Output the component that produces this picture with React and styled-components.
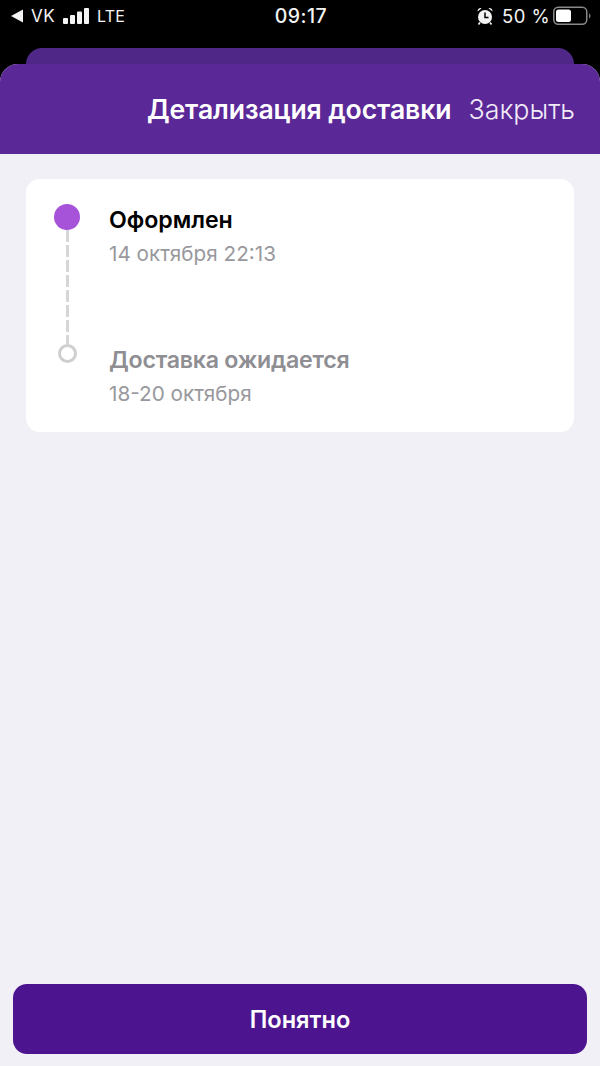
import React from 'react'
import styled, { createGlobalStyle } from 'styled-components'

const Global = createGlobalStyle`
  html, body { margin: 0; padding: 0; background: #000; }
  * { box-sizing: border-box; }
  body { font-family: Inter, "Noto Sans", sans-serif; }
`

const Page = styled.div`
  width: 600px;
  height: 1066px;
  background: #000;
  display: flex;
  flex-direction: column;
  overflow: hidden;
`

const StatusBar = styled.div`
  height: 48px;
  flex: none;
  padding: 0 9px 16px 11px;
  display: flex;
  align-items: center;
  justify-content: space-between;
  color: #f4f4f4;
  font-size: 18.5px;
`
const StatusSide = styled.div`
  width: 200px;
  display: flex;
  align-items: center;
  gap: ${p => p.$gap}px;
  justify-content: ${p => (p.$right ? 'flex-end' : 'flex-start')};
`
const Clock = styled.div`
  font-weight: 500;
  font-size: 19.5px;
  letter-spacing: 0.5px;
`
const Carrier = styled.span`
  font-size: 17px;
  letter-spacing: 0.4px;
`
const Network = styled.span`
  font-size: 16px;
  letter-spacing: 0.2px;
`
const Percent = styled.span`
  letter-spacing: 0.4px;
  margin-left: 1px;
  margin-right: -5px;
`

const BackSheet = styled.div`
  height: 16px;
  flex: none;
  margin: 0 26px;
  background: #4f2787;
  border-radius: 16px 16px 0 0;
`
const Sheet = styled.div`
  flex: 1;
  display: flex;
  flex-direction: column;
  background: #f1f0f6;
  border-radius: 18px 18px 0 0;
  overflow: hidden;
`
const Header = styled.div`
  height: 90px;
  flex: none;
  background: #5b2898;
  padding: 0 25px 0 0;
  display: flex;
  align-items: center;
  justify-content: flex-end;
  gap: 17px;
  color: #fff;
`
const Title = styled.div`
  font-size: 26.6px;
  font-weight: 600;
  letter-spacing: -0.1px;
`
const CloseLink = styled.div`
  font-size: 26.8px;
  font-weight: 300;
  color: #f1ebf8;
`

const Card = styled.div`
  margin: 25px 26px 0;
  padding: 25px 28px;
  background: #fff;
  border-radius: 14px;
`
const Step = styled.div`
  display: flex;
  gap: 29px;
  height: ${p => p.$height}px;
`
const Marker = styled.div`
  width: 26px;
  flex: none;
  display: flex;
  flex-direction: column;
  align-items: center;
`
const Dot = styled.div`
  width: 26px;
  height: 26px;
  border-radius: 50%;
  flex: none;
  background: #a653d9;
`
const Ring = styled.div`
  width: 19px;
  height: 19px;
  border-radius: 50%;
  flex: none;
  border: 3px solid #cfcfd1;
`
const Connector = styled.div`
  width: 3px;
  flex: 1;
  background: repeating-linear-gradient(to bottom, #d6d6d8 0 12px, transparent 12px 15px);
`
const StepText = styled.div`
  padding-top: 2px;
`
const StepTitle = styled.div`
  font-size: 23.2px;
  line-height: 28px;
  font-weight: 600;
  letter-spacing: ${p => (p.$muted ? '-0.25px' : '-0.05px')};
  color: ${p => (p.$muted ? '#8e8e93' : '#000')};
`
const StepDate = styled.div`
  margin-top: 7.5px;
  font-size: 20.7px;
  line-height: 24px;
  color: #98989d;
`

const Spacer = styled.div`
  flex: 1;
`
const Button = styled.button`
  height: 70px;
  flex: none;
  margin: 0 13px 12px;
  border: none;
  border-radius: 14px;
  background: #4c148f;
  color: #fff;
  font-family: inherit;
  font-size: 23.6px;
  font-weight: 600;
`

function SignalIcon() {
  return (
    <svg width="28" height="18" viewBox="0 0 28 18" fill="#f4f4f4">
      <rect x="1" y="11" width="5" height="6" rx="1" />
      <rect x="8" y="8" width="5" height="9" rx="1" />
      <rect x="15" y="4.5" width="5" height="12.5" rx="1" />
      <rect x="22" y="1" width="5" height="16" rx="1" />
    </svg>
  )
}

function BackIcon() {
  return (
    <svg width="13" height="14" viewBox="0 0 13 14" fill="#f4f4f4">
      <path d="M0 7 L12 0.5 V13.5 Z" />
    </svg>
  )
}

function AlarmIcon() {
  return (
    <svg width="16" height="18" viewBox="0 0 16 18">
      <circle cx="8" cy="10" r="7" fill="#f4f4f4" />
      <path d="M0.6 4.6 A3 3 0 0 1 4.6 1.2 Z M15.4 4.6 A3 3 0 0 0 11.4 1.2 Z" fill="#f4f4f4" />
      <path d="M8 5.5 V10.5 H11.5" fill="none" stroke="#000" strokeWidth="1.5" />
      <path d="M3 15.5 L1.5 17.5 M13 15.5 L14.5 17.5" stroke="#f4f4f4" strokeWidth="1.6" />
    </svg>
  )
}

function BatteryIcon() {
  return (
    <svg width="38" height="20" viewBox="0 0 38 20">
      <rect x="0.75" y="1.25" width="33" height="17" rx="4.5" fill="none" stroke="#8a8a8a" strokeWidth="1.5" />
      <rect x="3" y="3.5" width="15" height="12.5" rx="2.5" fill="#fff" />
      <path d="M36 7.5 C37 8 37.5 9 37.5 10 C37.5 11 37 12 36 12.5 Z" fill="#7a7a7a" />
    </svg>
  )
}

export default function App() {
  return (
    <Page>
      <Global />
      <StatusBar>
        <StatusSide $gap={7}>
          <BackIcon />
          <Carrier>VK</Carrier>
          <SignalIcon />
          <Network>LTE</Network>
        </StatusSide>
        <Clock>09:17</Clock>
        <StatusSide $right $gap={8}>
          <AlarmIcon />
          <Percent>50 %</Percent>
          <BatteryIcon />
        </StatusSide>
      </StatusBar>
      <BackSheet />
      <Sheet>
        <Header>
          <Title>Детализация доставки</Title>
          <CloseLink>Закрыть</CloseLink>
        </Header>
        <Card>
          <Step $height={140}>
            <Marker>
              <Dot />
              <Connector />
            </Marker>
            <StepText>
              <StepTitle>Оформлен</StepTitle>
              <StepDate>14 октября 22:13</StepDate>
            </StepText>
          </Step>
          <Step $height={63}>
            <Marker>
              <Ring />
            </Marker>
            <StepText>
              <StepTitle $muted>Доставка ожидается</StepTitle>
              <StepDate>18-20 октября</StepDate>
            </StepText>
          </Step>
        </Card>
        <Spacer />
        <Button>Понятно</Button>
      </Sheet>
    </Page>
  )
}
